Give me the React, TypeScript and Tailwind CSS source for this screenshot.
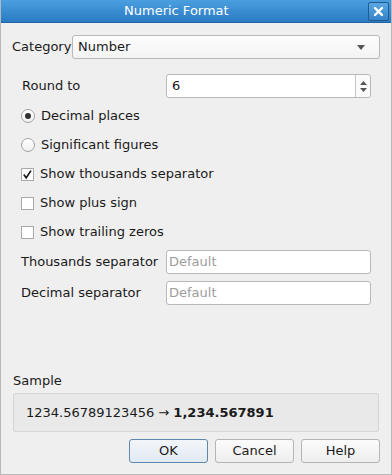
import React from "react";

const font = { fontFamily: '"DejaVu Sans", "Liberation Sans", sans-serif' };

function Radio({ checked, label }: { checked?: boolean; label: string }) {
  return (
    <div className="flex items-center h-[24px]">
      <div className="w-[14px] h-[14px] rounded-full border border-[#a3a3a3] bg-gradient-to-b from-[#ffffff] to-[#f0f0f0] flex items-center justify-center">
        {checked && <div className="w-[6px] h-[6px] rounded-full bg-[#303030]" />}
      </div>
      <span className="ml-[6px] text-[13px] text-[#1a1a1a]">{label}</span>
    </div>
  );
}

function Check({ checked, label }: { checked?: boolean; label: string }) {
  return (
    <div className="flex items-center h-[24px]">
      <div className="w-[13px] h-[13px] border border-[#a9a9a9] bg-white flex items-center justify-center">
        {checked && (
          <svg width="11" height="11" viewBox="0 0 11 11">
            <path d="M1.8 5.6 L4.2 8.8 L9 1.6" fill="none" stroke="#1a1a1a" strokeWidth="1.7" />
          </svg>
        )}
      </div>
      <span className="ml-[6px] text-[13px] text-[#1a1a1a]">{label}</span>
    </div>
  );
}

function Btn({ label, primary }: { label: string; primary?: boolean }) {
  return (
    <div
      className={
        "w-[79px] h-[24px] rounded-[3px] border flex items-center justify-center text-[13px] text-[#1a1a1a] " +
        (primary
          ? "border-[#5f87ad] bg-gradient-to-b from-[#f2f6fa] to-[#e1e9f1]"
          : "border-[#b5b5b5] bg-gradient-to-b from-[#fbfbfb] to-[#eeeeee]")
      }
    >
      {label}
    </div>
  );
}

export default function App() {
  return (
    <div style={font} className="w-[392px] h-[475px] flex flex-col bg-[#efefef] border-x border-b border-[#b8b8b8] overflow-hidden">
      {/* Title bar */}
      <div className="h-[23px] flex items-center bg-gradient-to-b from-[#4a9fe0] to-[#2b7bc4] border-b border-[#2264a3] -mx-px">
        <div className="flex-1 pl-[124px] text-[13px] text-white">Numeric Format</div>
        <div className="w-[21px] h-[19px] mr-[3px] rounded-[2px] border border-[#23598c] bg-gradient-to-b from-[#5aa8e4] to-[#3584c9] flex items-center justify-center">
          <svg width="11" height="11" viewBox="0 0 11 11">
            <path d="M2 2 L9 9 M9 2 L2 9" stroke="white" strokeWidth="2.4" strokeLinecap="round" />
          </svg>
        </div>
      </div>

      {/* Category */}
      <div className="flex items-center mt-[12px] pl-[11px] pr-[11px] h-[24px]">
        <span className="text-[13px] text-[#1a1a1a] w-[60px]">Category</span>
        <div className="flex-1 h-[24px] rounded-[3px] border border-[#b8b8b8] bg-gradient-to-b from-[#fdfdfd] to-[#f3f3f3] flex items-center pl-[5px] pr-[14px]">
          <span className="flex-1 text-[13px] text-[#1a1a1a]">Number</span>
          <svg width="8" height="5" viewBox="0 0 8 5">
            <path d="M0 0 L8 0 L4 5 Z" fill="#555" />
          </svg>
        </div>
      </div>

      {/* Options */}
      <div className="flex flex-col pl-[20px] pr-[20px]">
        <div className="flex items-center h-[24px] mt-[15px]">
          <span className="w-[145px] pl-[1px] text-[13px] text-[#1a1a1a]">Round to</span>
          <div className="flex-1 h-[24px] rounded-[3px] border border-[#b8b8b8] bg-white flex items-stretch">
            <span className="flex-1 flex items-center pl-[5px] text-[13px] text-[#1a1a1a]">6</span>
            <div className="w-[15px] border-l border-[#c6c6c6] flex flex-col items-center justify-center gap-[3px] bg-[#fafafa] rounded-r-[3px]">
              <svg width="7" height="4" viewBox="0 0 7 4">
                <path d="M0 4 L7 4 L3.5 0 Z" fill="#555" />
              </svg>
              <svg width="7" height="4" viewBox="0 0 7 4">
                <path d="M0 0 L7 0 L3.5 4 Z" fill="#555" />
              </svg>
            </div>
          </div>
        </div>

        <div className="mt-[6px]">
          <Radio checked label="Decimal places" />
        </div>
        <div className="mt-[5px]">
          <Radio label="Significant figures" />
        </div>
        <div className="mt-[5px]">
          <Check checked label="Show thousands separator" />
        </div>
        <div className="mt-[5px]">
          <Check label="Show plus sign" />
        </div>
        <div className="mt-[5px]">
          <Check label="Show trailing zeros" />
        </div>

        <div className="flex items-center h-[24px] mt-[6px]">
          <span className="w-[145px] text-[13px] text-[#1a1a1a]">Thousands separator</span>
          <div className="flex-1 h-[24px] rounded-[3px] border border-[#b8b8b8] bg-white flex items-center pl-[2px] text-[13px] text-[#9c9c9c]">
            Default
          </div>
        </div>
        <div className="flex items-center h-[24px] mt-[7px]">
          <span className="w-[145px] text-[13px] text-[#1a1a1a]">Decimal separator</span>
          <div className="flex-1 h-[24px] rounded-[3px] border border-[#b8b8b8] bg-white flex items-center pl-[2px] text-[13px] text-[#9c9c9c]">
            Default
          </div>
        </div>
      </div>

      <div className="flex-1" />

      {/* Sample */}
      <div className="pl-[12px] text-[13px] text-[#1a1a1a] leading-[16px]">Sample</div>
      <div className="mx-[12px] mt-[4px] h-[39px] border border-[#d6d6d6] bg-[#e9e9e9] rounded-[2px] flex items-center pl-[12px] text-[13px] text-[#1a1a1a]">
        1234.56789123456 →&nbsp;<b className="font-bold">1,234.567891</b>
      </div>

      <div className="flex justify-end gap-[7px] pr-[11px] mt-[7px] mb-[11px]">
        <Btn label="OK" primary />
        <Btn label="Cancel" />
        <Btn label="Help" />
      </div>
    </div>
  );
}
